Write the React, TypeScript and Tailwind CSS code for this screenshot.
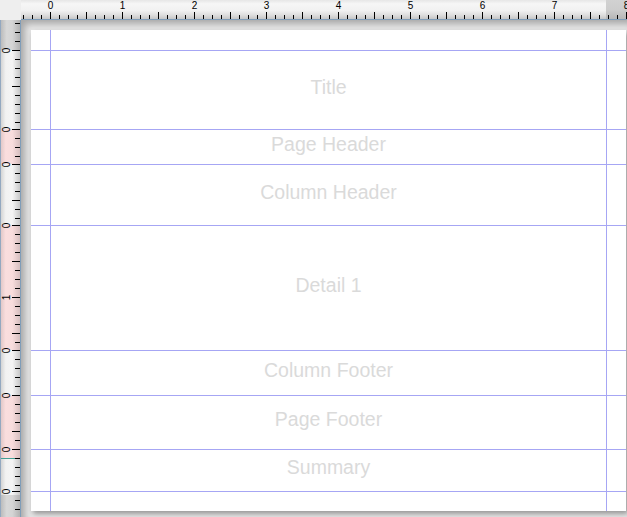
import React from "react";

const bands = [
  { name: "Title", cls: "h-[79px]" },
  { name: "Page Header", cls: "h-[35px]" },
  { name: "Column Header", cls: "h-[61px]" },
  { name: "Detail 1", cls: "h-[125px]" },
  { name: "Column Footer", cls: "h-[45px]" },
  { name: "Page Footer", cls: "h-[54px]" },
  { name: "Summary", cls: "h-[42px]" },
];

function TopRuler() {
  const ticks: { x: number; k: number }[] = [];
  for (let k = -3; 50 + 9 * k <= 627; k++) ticks.push({ x: 50 + 9 * k, k });
  return (
    <svg width={606} height={20} viewBox="21 0 606 20" className="block">
      <defs>
        <linearGradient id="tr" x1="0" y1="0" x2="0" y2="1">
          <stop offset="0" stopColor="#e6e6e6" />
          <stop offset="0.2" stopColor="#f6f6f6" />
          <stop offset="0.55" stopColor="#f1f1f1" />
          <stop offset="0.8" stopColor="#dddddd" />
          <stop offset="1" stopColor="#c6c6c6" />
        </linearGradient>
        <linearGradient id="trm" x1="0" y1="0" x2="0" y2="1">
          <stop offset="0" stopColor="#d2d2d2" />
          <stop offset="0.5" stopColor="#cdcdcd" />
          <stop offset="1" stopColor="#b6b6b6" />
        </linearGradient>
      </defs>
      <rect x={21} y={0} width={606} height={19} fill="url(#tr)" />
      <rect x={606} y={0} width={21} height={19} fill="url(#trm)" />
      <rect x={21} y={19} width={606} height={1} fill="#7f9db9" />
      {ticks.map(({ x, k }) => {
        const long = ((k % 4) + 4) % 4 === 0;
        return (
          <rect key={x} x={x} y={long ? 12 : 15} width={1} height={long ? 7 : 4} fill="#000" />
        );
      })}
      {ticks
        .filter((t) => t.k >= 0 && t.k % 8 === 0)
        .map(({ x, k }) => (
          <text
            key={"l" + x}
            x={x + 0.5}
            y={9}
            fontSize={10}
            textAnchor="middle"
            fill="#000"
            style={{ fontFamily: '"Liberation Sans", Arial, sans-serif' }}
          >
            {k / 8}
          </text>
        ))}
    </svg>
  );
}

function LeftRuler() {
  const origins = [50, 129, 164, 225, 350, 395, 449, 491];
  const ends = [129, 164, 225, 350, 395, 449, 491, 517];
  const regions: { y0: number; y1: number; kind: "gray" | "pink" | "white" }[] = [
    { y0: 20, y1: 50, kind: "gray" },
    { y0: 50, y1: 129, kind: "white" },
    { y0: 129, y1: 164, kind: "pink" },
    { y0: 164, y1: 225, kind: "white" },
    { y0: 225, y1: 350, kind: "pink" },
    { y0: 350, y1: 395, kind: "white" },
    { y0: 395, y1: 458, kind: "pink" },
    { y0: 458, y1: 495, kind: "white" },
    { y0: 495, y1: 517, kind: "gray" },
  ];
  const ticks: { y: number; long: boolean; label?: number }[] = [];
  for (let k = 1; k <= 3; k++) ticks.push({ y: 50 - 9 * k, long: false });
  origins.forEach((o, i) => {
    for (let k = 0; o + 9 * k < ends[i]; k++) {
      const y = o + 9 * k;
      const nearEnd = k > 0 && ends[i] - y < 10;
      ticks.push({
        y,
        long: k % 4 === 0 && !nearEnd,
        label: k % 8 === 0 && !nearEnd ? k / 8 : undefined,
      });
    }
  });
  return (
    <svg width={21} height={497} viewBox="0 20 21 497" className="block">
      <defs>
        <linearGradient id="lw" x1="0" y1="0" x2="1" y2="0">
          <stop offset="0" stopColor="#d4d4d4" />
          <stop offset="0.25" stopColor="#f2f2f2" />
          <stop offset="0.6" stopColor="#f4f4f4" />
          <stop offset="1" stopColor="#c8c8c8" />
        </linearGradient>
        <linearGradient id="lp" x1="0" y1="0" x2="1" y2="0">
          <stop offset="0" stopColor="#e2c8c8" />
          <stop offset="0.25" stopColor="#fadede" />
          <stop offset="0.6" stopColor="#f8dcdc" />
          <stop offset="1" stopColor="#d6bebe" />
        </linearGradient>
        <linearGradient id="lg" x1="0" y1="0" x2="1" y2="0">
          <stop offset="0" stopColor="#bcbcbc" />
          <stop offset="0.3" stopColor="#d8d8d8" />
          <stop offset="0.6" stopColor="#d4d4d4" />
          <stop offset="1" stopColor="#b2b2b2" />
        </linearGradient>
      </defs>
      {regions.map((r) => (
        <rect
          key={r.y0}
          x={1}
          y={r.y0}
          width={19}
          height={r.y1 - r.y0}
          fill={r.kind === "gray" ? "url(#lg)" : r.kind === "pink" ? "url(#lp)" : "url(#lw)"}
        />
      ))}
      <rect x={0} y={20} width={1} height={497} fill="#93a8c0" />
      <rect x={20} y={20} width={1} height={497} fill="#7f9db9" />
      <rect x={1} y={458} width={19} height={1} fill="#45a096" />
      {ticks.map((t) => (
        <rect key={t.y} x={t.long ? 12 : 15} y={t.y} width={t.long ? 8 : 5} height={1} fill="#000" />
      ))}
      {ticks
        .filter((t) => t.label !== undefined)
        .map((t) => (
          <text
            key={"l" + t.y}
            x={0}
            y={0}
            transform={`translate(10 ${t.y + 0.5}) rotate(-90)`}
            fontSize={10}
            textAnchor="middle"
            fill="#000"
            style={{ fontFamily: '"Liberation Sans", Arial, sans-serif' }}
          >
            {t.label}
          </text>
        ))}
    </svg>
  );
}

export default function App() {
  return (
    <div className="w-[627px] h-[517px] overflow-hidden grid grid-cols-[21px_606px] grid-rows-[20px_497px] bg-[#ececec] font-['Liberation_Sans',Arial,sans-serif]">
      <div className="bg-[#eeeeee]" />
      <TopRuler />
      <LeftRuler />
      <div className="relative bg-[#e8e8e8] shadow-[inset_5px_5px_7px_-1px_rgba(0,0,0,0.28)] overflow-hidden">
        <div className="relative ml-[10px] mt-[10px] w-[595px] h-[481px] bg-white flex flex-col shadow-[2px_3px_5px_rgba(0,0,0,0.35)]">
          <div className="h-[21px] shrink-0 border-b border-[#a6a6f4]" />
          {bands.map((b) => (
            <div
              key={b.name}
              className={`${b.cls} shrink-0 border-b border-[#a6a6f4] flex items-center justify-center pb-[5px] text-[19.5px] text-[#dadada]`}
            >
              {b.name}
            </div>
          ))}
          <div className="flex-1" />
          <div className="absolute top-0 bottom-0 left-[19px] w-px bg-[#a6a6f4]" />
          <div className="absolute top-0 bottom-0 left-[575px] w-px bg-[#a6a6f4]" />
        </div>
      </div>
    </div>
  );
}
